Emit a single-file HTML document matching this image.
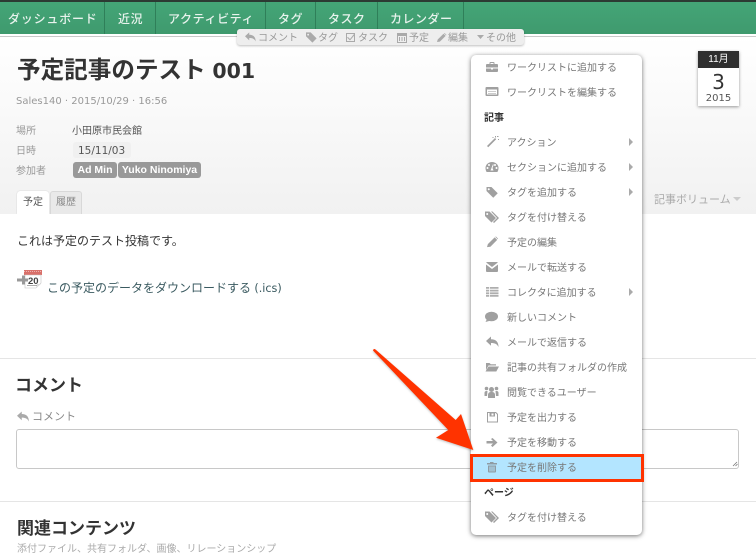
<!DOCTYPE html>
<html lang="ja"><head><meta charset="utf-8"><title>予定記事のテスト 001</title>
<style>
html,body{margin:0;padding:0}
body{width:756px;height:551px;overflow:hidden;position:relative;background:#fff;font-family:"Liberation Sans","Noto Sans CJK JP",sans-serif;color:#333}
.a{position:absolute;white-space:nowrap}
#top{left:0;top:36px;width:756px;height:178px;background:linear-gradient(#fff,#f1f1f1)}
#nav{left:0;top:0;width:756px;height:34px;background:linear-gradient(#44a577,#3f9a6e);border-top:2px solid #2c3a33;box-sizing:border-box}
#navline{left:0;top:36px;width:756px;height:1px;background:#c9c9c9}
.sep{position:absolute;top:2px;width:1px;height:32px;background:#2f7f59}
.n{position:absolute;top:11px;line-height:16px;font-size:12px;color:#e8f3ed;font-weight:500}
#tb{left:237px;top:29px;width:287px;height:16px;background:#eee;border-radius:3px;box-shadow:0 1px 2px rgba(0,0,0,.25)}
.t{position:absolute;top:31px;line-height:15px;font-size:10px;color:#999}
.l{position:absolute;left:16px;font-size:10px;line-height:14px;color:#999}
.tag{position:absolute;top:162px;height:16px;line-height:17px;background:#999;color:#fff;font-size:10.5px;font-weight:bold;border-radius:3px;text-align:center}
#menu{left:471px;top:55px;width:171px;height:480px;background:#fff;border-radius:5px;box-shadow:0 1px 5px rgba(0,0,0,.55)}
.m{position:absolute;left:507px;font-size:10px;line-height:16px;color:#777}
.h{position:absolute;left:484px;font-size:10px;line-height:16px;color:#333;font-weight:bold}
.r{position:absolute;left:629px;width:0;height:0;border-left:4px solid #aaa;border-top:4px solid transparent;border-bottom:4px solid transparent}
</style></head><body>
<div class="a" id="top"></div>
<div class="a" id="nav"></div>
<div class="a" id="navline"></div>
<div class="sep" style="left:104px"></div><div class="sep" style="left:155px"></div><div class="sep" style="left:265px"></div><div class="sep" style="left:315px"></div><div class="sep" style="left:377px"></div><div class="sep" style="left:463px"></div>
<div class="n" style="left:8px;letter-spacing:.8px">ダッシュボード</div>
<div class="n" style="left:118px;letter-spacing:.5px">近況</div>
<div class="n" style="left:168px;letter-spacing:.6px">アクティビティ</div>
<div class="n" style="left:278px;letter-spacing:.5px">タグ</div>
<div class="n" style="left:328px;letter-spacing:.5px">タスク</div>
<div class="n" style="left:390px;letter-spacing:.5px">カレンダー</div>

<div class="a" id="tb"></div>
<div class="t" style="left:258px">コメント</div>
<div class="t" style="left:318px">タグ</div>
<div class="t" style="left:358px">タスク</div>
<div class="t" style="left:409px">予定</div>
<div class="t" style="left:448px">編集</div>
<div class="t" style="left:486px">その他</div>

<div class="a" style="left:17px;top:55px;font-size:23.6px;line-height:32px;font-weight:bold;color:#333">予定記事のテスト <span style="font-family:'DejaVu Sans',sans-serif;font-size:20.5px">001</span></div>
<div class="a" style="left:16px;top:95px;font-family:'DejaVu Sans','Noto Sans CJK JP',sans-serif;font-size:10px;line-height:14px;color:#999">Sales140 · 2015/10/29 · 16:56</div>

<div class="l" style="top:125px">場所</div>
<div class="a" style="left:72px;top:125px;font-size:10px;line-height:14px;color:#555">小田原市民会館</div>
<div class="l" style="top:145px">日時</div>
<div class="a" style="left:73px;top:142px;width:58px;height:16px;background:#f0f0f0;border-radius:3px"></div>
<div class="a" style="left:78px;top:144px;font-family:'DejaVu Sans',sans-serif;font-size:10.5px;line-height:14px;color:#555">15/11/03</div>
<div class="l" style="top:165px">参加者</div>
<div class="tag" style="left:73px;width:44px">Ad Min</div>
<div class="tag" style="left:118px;width:83px">Yuko Ninomiya</div>

<div class="a" style="left:17px;top:191px;width:32px;height:23px;background:#fff;border-radius:3px 3px 0 0;box-shadow:0 0 1px rgba(0,0,0,.25);text-align:center;font-size:10px;line-height:23px;color:#555">予定</div>
<div class="a" style="left:50px;top:191px;width:32px;height:23px;background:#e9e9e9;border:1px solid #d8d8d8;border-bottom:0;box-sizing:border-box;border-radius:3px 3px 0 0;text-align:center;font-size:10px;line-height:22px;color:#888">履歴</div>
<div class="a" style="left:0;top:214px;width:756px;height:145px;background:#fff"></div>

<div class="a" style="left:17px;top:233px;font-size:12px;line-height:17px;color:#333">これは予定のテスト投稿です。</div>
<div class="a" style="left:47px;top:279px;font-size:12px;line-height:18px;color:#3a5a60">この予定のデータをダウンロードする <span style="font-family:'DejaVu Sans',sans-serif;font-size:11.2px">(.ics)</span></div>

<div class="a" style="left:654px;top:192px;font-size:11px;line-height:16px;color:#aaa">記事ボリューム</div>
<div class="a" style="left:733px;top:197px;width:0;height:0;border-top:4px solid #ccc;border-left:4px solid transparent;border-right:4px solid transparent"></div>

<div class="a" style="left:698px;top:51px;width:41px;height:55px;background:#fff;box-shadow:0 1px 3px rgba(0,0,0,.4)"></div>
<div class="a" style="left:698px;top:51px;width:41px;height:17px;background:#2f2f2f;color:#fff;font-size:10px;line-height:17px;text-align:center">11月</div>
<div class="a" style="left:698px;top:71px;width:41px;text-align:center;font-family:'DejaVu Sans',sans-serif;font-size:20px;line-height:22px;color:#333">3</div>
<div class="a" style="left:698px;top:92px;width:41px;text-align:center;font-family:'DejaVu Sans',sans-serif;font-size:10px;line-height:13px;color:#555">2015</div>

<div class="a" style="left:0;top:358px;width:756px;height:1px;background:#e5e5e5"></div>
<div class="a" style="left:15px;top:374px;font-size:17px;line-height:24px;font-weight:bold;color:#333">コメント</div>
<div class="a" style="left:32px;top:409px;font-size:11px;line-height:16px;color:#888">コメント</div>
<div class="a" style="left:16px;top:429px;width:723px;height:40px;box-sizing:border-box;border:1px solid #c8c8c8;border-radius:3px;background:#fff"></div>
<div class="a" style="left:0;top:501px;width:756px;height:1px;background:#e5e5e5"></div>
<div class="a" style="left:17px;top:517px;font-size:17px;line-height:24px;font-weight:bold;color:#333">関連コンテンツ</div>
<div class="a" style="left:17px;top:542px;font-size:10px;line-height:16px;color:#aaa">添付ファイル、共有フォルダ、画像、リレーションシップ</div>

<div class="a" id="menu"></div>
<div class="a" style="left:471px;top:456px;width:171px;height:24px;background:#b3e5ff"></div>
<div class="a" style="left:470px;top:454px;width:174px;height:28px;box-sizing:border-box;border:3px solid #ff3300"></div>

<div class="m" style="top:61px">ワークリストに追加する</div>
<div class="m" style="top:86px">ワークリストを編集する</div>
<div class="h" style="top:111px">記事</div>
<div class="m" style="top:136px">アクション</div>
<div class="m" style="top:161px">セクションに追加する</div>
<div class="m" style="top:186px">タグを追加する</div>
<div class="m" style="top:211px">タグを付け替える</div>
<div class="m" style="top:236px">予定の編集</div>
<div class="m" style="top:261px">メールで転送する</div>
<div class="m" style="top:286px">コレクタに追加する</div>
<div class="m" style="top:311px">新しいコメント</div>
<div class="m" style="top:336px">メールで返信する</div>
<div class="m" style="top:361px">記事の共有フォルダの作成</div>
<div class="m" style="top:386px">閲覧できるユーザー</div>
<div class="m" style="top:411px">予定を出力する</div>
<div class="m" style="top:436px">予定を移動する</div>
<div class="m" style="top:461px">予定を削除する</div>
<div class="h" style="top:486px">ページ</div>
<div class="m" style="top:511px">タグを付け替える</div>
<div class="r" style="top:138px"></div><div class="r" style="top:163px"></div><div class="r" style="top:188px"></div><div class="r" style="top:288px"></div>

<svg class="a" style="left:0;top:0" width="756" height="551" viewBox="0 0 756 551">
<defs>
<path id="reply" d="M0 5L5 0.5V3.2C10 3.2 12.5 6 12.5 11C11 8 9 7 5 7V9.8Z"/>
<path id="tag" d="M0 0.5H5.500L12.500 7.500L7.500 12.500L0 5ZM2.500 2a1.100 1.100 0 1 0 .01 0Z" fill-rule="evenodd"/>
<path id="tags" d="M0 0.5H4.500L11 7L6.500 11.500L0 5ZM2.200 2a1 1 0 1 0 .01 0ZM6 0.5H7.500L14 7L9 12L8 11L12 7Z" fill-rule="evenodd"/>
<path id="pencil" d="M0 12.500L1 9L9 1L12 4L4 12ZM9.700 .5L10.500 0L13 2.500L12.700 3.300Z"/>
</defs>
<g fill="#aaa">
<use href="#reply" transform="translate(245 32) scale(.85)"/>
<use href="#tag" transform="translate(306 32) scale(.85)"/>
<path d="M346 33h9v9h-9zM347 34v7h7v-7z" fill-rule="evenodd"/><path d="M348 37l2 2 4-5 .8.8-4.800 5.700-3-3z"/>
<path d="M397 33h10v10h-10zM398 36v6h8v-6z" fill-rule="evenodd"/><path d="M399 37h1v4h-1zM401.500 37h1v4h-1zM404 37h1v4h-1z"/>
<use href="#pencil" transform="translate(437 33) scale(.72)"/>
<path d="M477 35h7l-3.500 4z"/>
</g>
<g fill="#a0a0a0">
<!-- briefcase -->
<path d="M487 64h10a1 1 0 0 1 1 1v2.500h-12V65a1 1 0 0 1 1-1zM489.500 64v-1a1 1 0 0 1 1-1h3a1 1 0 0 1 1 1v1h-1v-1h-3v1zM486 68.500h5v1h2v-1h5V71a1 1 0 0 1-1 1h-10a1 1 0 0 1-1-1z"/>
<!-- worklist edit -->
<path d="M486.500 87h11a1 1 0 0 1 1 1v7a1 1 0 0 1-1 1h-11a1 1 0 0 1-1-1v-7a1 1 0 0 1 1-1zM487 89.500v5h10v-5z" fill-rule="evenodd"/><rect x="488" y="91" width="8" height="1" fill="#ccc"/><rect x="488" y="93" width="8" height="1" fill="#ccc"/>
<!-- wand -->
<path d="M487 146l8-8 1.200 1.200-8 8z"/><path d="M495 136h1v1.500h-1zM498 139h1v1h-1zM492.500 137h1v1h-1zM497 136h1.500v1h-1.500z"/>
<!-- gauge -->
<path d="M492 162a6.500 6 0 0 1 6.500 6c0 1.500-.5 3-1.100 4h-10.800c-.6-1-1.100-2.500-1.100-4a6.500 6 0 0 1 6.500-6zM491.500 168l-1 2.500h3l-1-2.500 1.300-3.500-1 0zM487.500 167a1 1 0 1 0 .01 0zM489 164a1 1 0 1 0 .01 0zM495 164a1 1 0 1 0 .01 0zM496.500 167a1 1 0 1 0 .01 0z" fill-rule="evenodd"/>
<use href="#tag" transform="translate(486.500 186.500) scale(.9)"/>
<use href="#tags" transform="translate(485 211)"/>
<use href="#pencil" transform="translate(487 236.500) scale(.85)"/>
<!-- envelope -->
<path d="M487 262h10a1 1 0 0 1 .8.500L492 267 486.200 262.500A1 1 0 0 1 487 262zM486 264.500l6 4.500 6-4.500v6.500a1 1 0 0 1-1 1h-10a1 1 0 0 1-1-1z"/>
<!-- list -->
<path d="M486 287h12.500v1.800H486zM486 289.700h12.500v1.800H486zM486 292.400h12.500v1.800H486zM486 295h12.500v1.800H486z" opacity=".85"/><rect x="489" y="287" width=".8" height="10" fill="#fff"/>
<!-- comment -->
<ellipse cx="491.500" cy="316.500" rx="6.500" ry="4.800"/><path d="M487 319l-1.500 3 4.500-1.200z"/>
<use href="#reply" transform="translate(486 336)"/>
<!-- folder -->
<path d="M486 363h3.500l1.300 1.200h5.200v1.300h-7.500l-2.500 4.500zM488.500 366.500h10.500l-2.700 5h-10.800z"/>
<!-- users -->
<circle cx="491.500" cy="389.500" r="2.500"/><circle cx="486.500" cy="388.500" r="1.800"/><circle cx="496.500" cy="388.500" r="1.800"/><path d="M488 398v-3.500a3 3 0 0 1 3-2.500h1a3 3 0 0 1 3 2.500v3.500zM484.500 396v-3a2 2 0 0 1 2-2h1l-.5 5zM498.500 396v-3a2 2 0 0 0-2-2h-1l.5 5z"/>
<!-- save -->
<path d="M487 412h9l2 2v8.500h-11zM488 413v8.500h9v-7l-1.500-1.500h-.5v3.500h-5.500V413zM491.500 413.500h2v2h-2z" fill-rule="evenodd"/>
<!-- arrow right -->
<path d="M492.500 438l5 4.500-5 4.500-1.500-1.500 2-2h-6.500v-2.500H493l-2-2z"/>
<!-- trash -->
<path d="M490 462h3.500v1H497v1.500h-10V463h3zM488 465.500h8v6a1 1 0 0 1-1 1h-6a1 1 0 0 1-1-1zM489.500 466.500v5h1v-5zM491.500 466.500v5h1v-5zM493.500 466.500v5h1v-5z" fill-rule="evenodd" fill="#8f9ba3"/>
<use href="#tags" transform="translate(485 511)"/>
<use href="#reply" transform="translate(17 411) scale(.95)" fill="#aaa"/>
</g>
<!-- textarea grip -->
<g stroke="#777" stroke-width=".8"><path d="M733 466l4-4M735.500 466l2-2"/></g>
<!-- calendar icon -->
<rect x="24" y="270" width="18" height="5" fill="#d9706a"/>
<path d="M24 271.500h18" stroke="#f3c9c6" stroke-width=".8" stroke-dasharray="1 1"/>
<path d="M25 275h16v8l-5 5H25z" fill="#fff" stroke="#c4c4c4" stroke-width=".6"/>
<path d="M36 288l1-4h4z" fill="#ddd"/>
<path d="M17 278.500h5v-3h3v3h3v3h-3v3h-3v-3h-5z" fill="#999"/>
<text x="28" y="284" font-family="Liberation Sans,sans-serif" font-size="9.500" font-weight="bold" fill="#444">20</text>
<path d="M27 285.500h10" stroke="#888" stroke-width=".7"/>
<!-- arrow -->
<path d="M373 350.500Q373.500 348 375.500 349.500L455.700 420L461 414L473.300 450L436 437.700L448.300 430Z" fill="#ff3300" style="filter:drop-shadow(0 1px 1px rgba(0,0,0,.25))"/>
</svg>
</body></html>
